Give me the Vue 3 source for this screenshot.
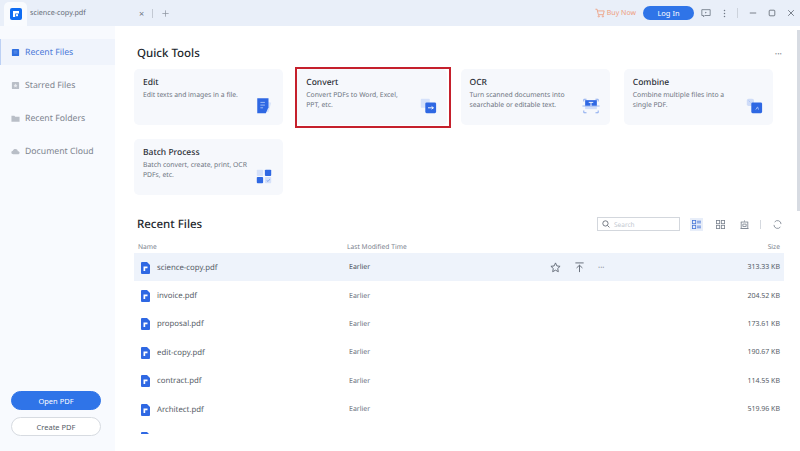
<script setup>
const navItems = [
  { label: 'Recent Files', icon: 'file', active: true },
  { label: 'Starred Files', icon: 'star' },
  { label: 'Recent Folders', icon: 'folder' },
  { label: 'Document Cloud', icon: 'cloud' }
]

const tools = [
  { title: 'Edit', text: 'Edit texts and images in a file.', icon: 'edit' },
  { title: 'Convert', text: 'Convert PDFs to Word, Excel, PPT, etc.', icon: 'convert', marked: true },
  { title: 'OCR', text: 'Turn scanned documents into searchable or editable text.', icon: 'ocr' },
  { title: 'Combine', text: 'Combine multiple files into a single PDF.', icon: 'combine' },
  { title: 'Batch Process', text: 'Batch convert, create, print, OCR PDFs, etc.', icon: 'batch' }
]

const files = [
  { name: 'science-copy.pdf', size: '313.33 KB', active: true },
  { name: 'invoice.pdf', size: '204.52 KB' },
  { name: 'proposal.pdf', size: '173.61 KB' },
  { name: 'edit-copy.pdf', size: '190.67 KB' },
  { name: 'contract.pdf', size: '114.55 KB' },
  { name: 'Architect.pdf', size: '519.96 KB' },
  { name: 'manuscript.pdf', size: '145.13 KB' }
]
</script>

<template>
  <div class="app">
    <header class="titlebar">
      <div class="tab">
        <svg class="logo" viewBox="0 0 12 12">
          <rect width="12" height="12" rx="2" fill="#0f6cf2" />
          <path d="M3 3h6v2.400H5.200V9H3z" fill="#fff" />
          <rect x="6" y="6.200" width="2" height="2" fill="#fff" />
        </svg>
      </div>
      <span class="tab-name">science-copy.pdf</span>
      <span class="tab-close">×</span>
      <span class="tab-sep"></span>
      <svg class="tab-add" viewBox="0 0 10 10"><path d="M5 .5v9M.5 5h9" stroke="#8a919c" fill="none" /></svg>
      <div class="bar-right">
        <svg class="cart" viewBox="0 0 12 12" fill="none" stroke="#ee9c7c">
          <path d="M.5 1.500h2l1.500 6.500h6l1-4.500H3" />
          <circle cx="4.500" cy="10" r=".8" />
          <circle cx="9.500" cy="10" r=".8" />
        </svg>
        <span class="buy">Buy Now</span>
        <button class="login">Log In</button>
        <svg class="bar-icon feedback" viewBox="0 0 12 12" fill="none" stroke="#6f7885">
          <path d="M1 2h10v7H4.500L3 10.500V9H1z" />
          <path d="M5 4.500l2 1-2 1z" fill="#6f7885" stroke="none" />
        </svg>
        <svg class="bar-icon dots" viewBox="0 0 4 12"><g fill="#6f7885"><circle cx="2" cy="2" r="1" /><circle cx="2" cy="6" r="1" /><circle cx="2" cy="10" r="1" /></g></svg>
        <span class="bar-sep"></span>
        <svg class="bar-icon win min" viewBox="0 0 10 10"><path d="M1 5h8" stroke="#5d6570" fill="none" /></svg>
        <svg class="bar-icon win max" viewBox="0 0 10 10"><rect x="1.500" y="1.500" width="7" height="7" rx="1" stroke="#5d6570" fill="none" /></svg>
        <svg class="bar-icon win" viewBox="0 0 10 10"><path d="M1.500 1.500l7 7M8.500 1.500l-7 7" stroke="#5d6570" fill="none" /></svg>
      </div>
    </header>

    <div class="body">
      <aside class="sidebar">
        <nav class="nav">
          <div v-for="item in navItems" :key="item.label" class="nav-item" :class="{ 'nav-item--active': item.active }">
            <svg class="nav-icon" viewBox="0 0 10 10">
              <template v-if="item.icon === 'file'">
                <rect x="1" y="1" width="8" height="8" rx="1" fill="#2f6fe0" />
                <path d="M3 3.500h4M3 5.500h4" stroke="#7fa6ee" stroke-width=".7" />
              </template>
              <template v-else-if="item.icon === 'star'">
                <rect x="1" y="1" width="8" height="8" rx="1" fill="#b9bec7" />
                <path d="M5 2.800l.7 1.500 1.500.2-1.100 1 .3 1.600L5 6.400l-1.400.7.3-1.600-1.100-1 1.500-.2z" fill="#e9ebef" />
              </template>
              <path v-else-if="item.icon === 'folder'" d="M.5 2h3.200l1 1h4.800v5.500H.5z" fill="#b9bec7" />
              <path v-else d="M2.500 8C1.200 8 .4 7.100 .4 6.100c0-1 .8-1.800 1.700-1.800C2.400 3 3.500 2.300 4.800 2.300c1.500 0 2.600 1 2.800 2.300 1.100 0 2 .7 2 1.700S8.800 8 7.800 8z" fill="#b9bec7" />
            </svg>
            <span>{{ item.label }}</span>
          </div>
        </nav>
        <div class="side-actions">
          <button class="side-btn side-btn--primary">Open PDF</button>
          <button class="side-btn">Create PDF</button>
        </div>
      </aside>

      <main class="main">
        <div class="section-head">
          <h2 class="title">Quick Tools</h2>
          <span class="more">···</span>
        </div>

        <div class="tools">
          <div v-for="tool in tools" :key="tool.title" class="tool" :class="{ 'tool--marked': tool.marked }">
            <div class="tool-title">{{ tool.title }}</div>
            <p class="tool-text">{{ tool.text }}</p>
            <svg class="tool-icon" viewBox="0 0 20 20">
              <template v-if="tool.icon === 'edit'">
                <path d="M13 5l5 1.500-3 10.500-4-1z" fill="#d9e4fa" />
                <path d="M2.500 1.500H15v10l-3 6.500H2.500z" fill="#2f68e3" />
                <path d="M6 6h5M6 9h5M6 12h3" stroke="#a9c3f6" stroke-width="1" />
              </template>
              <template v-else-if="tool.icon === 'convert'">
                <rect x="2" y="2" width="10" height="10" rx="1" fill="#d5e1fa" />
                <rect x="7" y="6" width="12" height="12" rx="1.500" fill="#2f68e3" />
                <path d="M10 12h6M14 10.500l2 1.500-2 1.500" stroke="#fff" fill="none" />
              </template>
              <template v-else-if="tool.icon === 'ocr'">
                <path d="M2 5V2.500h3M15 2.500h3V5M2 15v2.500h3M15 17.500h3V15" stroke="#7ea2ec" fill="none" />
                <rect x="3.500" y="3.500" width="13" height="6.500" fill="#2f68e3" />
                <rect x="3.500" y="10" width="13" height="3.500" fill="#cfdcf8" />
                <path d="M.5 10h19" stroke="#8fb0f0" />
                <path d="M7.500 6h5M10 6v4" stroke="#fff" />
              </template>
              <template v-else-if="tool.icon === 'combine'">
                <rect x="2" y="2" width="8" height="8" rx="2" fill="#cfdcf8" />
                <rect x="7" y="6" width="12" height="12" rx="1.500" fill="#2f68e3" />
                <path d="M4 4l2 2M12 14l2-3 1 3" stroke="#a9c3f6" fill="none" />
              </template>
              <template v-else>
                <rect x="2" y="3" width="7" height="7" rx="1" fill="#d5e1fa" />
                <rect x="11" y="3" width="7" height="7" rx="1" fill="#2f68e3" />
                <rect x="2" y="11" width="7" height="7" rx="1" fill="#2f68e3" />
                <rect x="11" y="11" width="7" height="7" rx="1" fill="#d5e1fa" />
                <path d="M13 15l1.500 1L16.500 13.500" stroke="#7ea2ec" fill="none" />
              </template>
            </svg>
          </div>
        </div>

        <div class="section-head section-head--files">
          <h2 class="title">Recent Files</h2>
          <div class="file-tools">
            <div class="search">
              <svg viewBox="0 0 10 10" class="search-icon" fill="none" stroke="#555d68"><circle cx="4.300" cy="4.300" r="3.300" /><path d="M6.800 6.800l2.500 2.500" /></svg>
              <span>Search</span>
            </div>
            <span class="view-btn view-btn--on">
              <svg viewBox="0 0 11 11" fill="none" stroke="#4a78d8"><rect x=".5" y=".5" width="4" height="4" /><rect x=".5" y="6.500" width="4" height="4" /><path d="M6 1.500h5M6 3.500h5M6 7.500h5M6 9.500h5" /></svg>
            </span>
            <span class="view-btn">
              <svg viewBox="0 0 11 11" fill="none" stroke="#7b838f"><rect x=".5" y=".5" width="4" height="4" /><rect x="6.500" y=".5" width="4" height="4" /><rect x=".5" y="6.500" width="4" height="4" /><rect x="6.500" y="6.500" width="4" height="4" /></svg>
            </span>
            <span class="view-btn">
              <svg viewBox="0 0 11 11" fill="none" stroke="#7b838f"><path d="M5.500 .5v1.500M1 2.500h9M1.500 2.500v8h8v-8M.5 10.500h10M3.500 5h4v3h-4z" /></svg>
            </span>
            <span class="tools-sep"></span>
            <svg class="refresh" viewBox="0 0 11 11" fill="none" stroke="#7b838f"><path d="M2 2.500A4.300 4.300 0 0 1 9.800 5M9 8.500A4.300 4.300 0 0 1 1.200 6" /></svg>
          </div>
        </div>

        <div class="table-head">
          <span>Name</span>
          <span>Last Modified Time</span>
          <span></span>
          <span class="size-col">Size</span>
        </div>

        <div class="rows">
          <div v-for="file in files" :key="file.name" class="row" :class="{ 'row--active': file.active }">
            <div class="file-name">
              <svg class="file-icon" viewBox="0 0 9 12">
                <path d="M1 0h5l3 3v8a1 1 0 0 1-1 1H1a1 1 0 0 1-1-1V1a1 1 0 0 1 1-1z" fill="#2f68e3" />
                <path d="M2.500 4.500h4v1.800H4.200V9H2.500z" fill="#fff" />
              </svg>
              <span>{{ file.name }}</span>
            </div>
            <span class="time">Earlier</span>
            <div v-if="file.active" class="row-actions">
              <svg viewBox="0 0 12 12" fill="none" stroke="#5f6773"><path d="M6 1l1.500 3.300 3.500.4-2.600 2.400.7 3.500L6 8.900l-3.100 1.700.7-3.500L1 4.700l3.500-.4z" /></svg>
              <svg viewBox="0 0 12 12" fill="none" stroke="#5f6773"><path d="M1.500 1h9M6 11V3.500M2.800 6.500L6 3.500l3.200 3" /></svg>
              <span class="row-more">···</span>
            </div>
            <span v-else></span>
            <span class="size-col size">{{ file.size }}</span>
          </div>
        </div>
      </main>
      <div class="scrollbar"></div>
    </div>
  </div>
</template>

<style>
html, body { margin: 0; background: #fff; }
</style>

<style scoped>
.app {
  width: 800px;
  height: 451px;
  display: flex;
  flex-direction: column;
  overflow: hidden;
  font-family: "Noto Sans", "Open Sans", sans-serif;
  color: #33383f;
  text-rendering: geometricPrecision;
}
.titlebar {
  height: 26px;
  flex: none;
  display: flex;
  align-items: center;
  background: #e9eff9;
}
.tab {
  width: 23px;
  height: 24px;
  margin: 2px 0 0 4px;
  background: #f9fbfe;
  border-radius: 5px 5px 0 0;
  display: flex;
  align-items: center;
  justify-content: center;
}
.logo { width: 12px; height: 12px; }
.tab-name { margin-left: 3px; font-size: 7.200px; color: #666d78; width: 109px; }
.tab-close { font-size: 9px; color: #6a717c; width: 9px; }
.tab-sep { width: 1px; height: 9px; background: #c3c9d3; margin-left: 4px; }
.tab-add { width: 7px; height: 7px; margin-left: 9px; }
.bar-right { margin-left: auto; display: flex; align-items: center; padding-right: 5px; }
.cart { width: 10px; height: 10px; }
.buy { font-size: 7px; color: #ee9c7c; margin-left: 2px; }
.login {
  width: 51px;
  height: 14px;
  margin-left: 7px;
  padding: 0;
  border: none;
  border-radius: 7px;
  background: #2f74e8;
  color: #fff;
  font: 7.500px "Noto Sans", sans-serif;
}
.bar-icon { display: block; flex: none; }
.feedback { width: 10px; height: 10px; margin-left: 7px; }
.dots { width: 3px; height: 9px; margin-left: 12px; }
.bar-sep { width: 1px; height: 10px; background: #cdd3dc; margin: 0 11px; }
.win { width: 8px; height: 8px; }
.min { margin-right: 11px; }
.max { margin-right: 11px; }

.body { flex: 1; display: flex; min-height: 0; }
.sidebar {
  width: 115px;
  flex: none;
  background: #f8fafe;
  display: flex;
  flex-direction: column;
  justify-content: space-between;
  padding-bottom: 15px;
  box-sizing: border-box;
}
.nav { padding-top: 13px; display: flex; flex-direction: column; gap: 7px; }
.nav-item {
  height: 26px;
  display: flex;
  align-items: center;
  gap: 5px;
  padding-left: 11px;
  font-size: 8.700px;
  color: #7d848e;
}
.nav-item--active {
  color: #4a78d8;
  background: #f0f4fc;
  box-shadow: inset 1px 0 0 #bcd0f4;
}
.nav-icon { width: 9px; height: 9px; flex: none; }
.side-actions { display: flex; flex-direction: column; gap: 7px; align-items: flex-start; padding-left: 11px; }
.side-btn {
  width: 90px;
  height: 19px;
  padding: 0;
  border: 1px solid #d7dbe1;
  border-radius: 10px;
  background: #fff;
  color: #555c66;
  font: 7.500px "Noto Sans", sans-serif;
}
.side-btn--primary { background: #2f74e8; border-color: #2f74e8; color: #fff; }

.main {
  flex: 1;
  min-width: 0;
  padding: 19px 14px 0 19px;
  display: flex;
  flex-direction: column;
}
.section-head { display: flex; align-items: center; justify-content: space-between; padding: 0 0 0 3px; height: 16px; }
.title { margin: 0; font-size: 11.500px; font-weight: 500; color: #23272d; }
.more { font-size: 9px; color: #666d78; margin-right: 4px; }
.tools {
  width: 639px;
  margin-top: 8px;
  display: grid;
  grid-template-columns: repeat(4, 1fr);
  gap: 14px;
}
.tool {
  height: 56px;
  background: #f6f8fc;
  border-radius: 5px;
  padding: 7px 9px 0;
  box-sizing: border-box;
  position: relative;
}
.tool--marked::after {
  content: "";
  position: absolute;
  left: -2px;
  top: -2px;
  right: -4px;
  bottom: -3px;
  border: 2px solid #c5202c;
  box-sizing: border-box;
  pointer-events: none;
}
.tool-title { font-size: 8.500px; font-weight: 500; color: #2b2f36; line-height: 13px; }
.tool-text { margin: 1px 0 0; width: 105px; font-size: 6.800px; line-height: 9.500px; color: #6d747f; }
.tool-icon { position: absolute; right: 10px; bottom: 10px; width: 18px; height: 18px; }

.section-head--files { margin-top: 20px; padding-right: 4px; height: 18px; }
.file-tools { display: flex; align-items: center; }
.search {
  width: 83px;
  height: 14px;
  box-sizing: border-box;
  border: 1px solid #d3d7dd;
  display: flex;
  align-items: center;
  gap: 4px;
  padding-left: 4px;
  font-size: 6.500px;
  color: #c2c7cf;
}
.search-icon { width: 8px; height: 8px; }
.view-btn {
  width: 13px;
  height: 13px;
  margin-left: 11px;
  display: flex;
  align-items: center;
  justify-content: center;
}
.view-btn--on { background: #e8eef9; margin-left: 10px; }
.view-btn svg { width: 9px; height: 9px; }
.tools-sep { width: 1px; height: 9px; background: #d5d9df; margin: 0 12px 0 9px; }
.refresh { width: 9px; height: 9px; }

.table-head, .row {
  display: grid;
  align-items: center;
  padding: 0 4px 0 4px;
  margin-right: 2px;
}
.table-head {
  grid-template-columns: 209px 186px 1fr auto;
  margin-top: 7px;
  height: 13px;
  font-size: 6.700px;
  color: #7a818c;
}
.rows { height: 181px; overflow: hidden; }
.row {
  grid-template-columns: 211px 189px 1fr auto;
  height: 28.400px;
  box-sizing: border-box;
  padding-top: 1px;
  font-size: 7.500px;
  color: #6d747f;
}
.row--active { background: #eef3fb; color: #4d545e; }
.file-name { display: flex; align-items: center; gap: 7px; padding-left: 3px; font-size: 7.800px; color: #555c66; }
.file-icon { width: 9px; height: 12px; flex: none; }
.time { font-size: 7px; }
.row-actions { display: flex; align-items: center; gap: 13px; padding-left: 12px; }
.row-actions svg { width: 11px; height: 11px; }
.row-more { font-size: 8px; color: #5f6773; }
.size { font-size: 7px; color: #555c66; }
.scrollbar {
  position: absolute;
  left: 797px;
  top: 30px;
  width: 3px;
  height: 181px;
  background: #d7dbe2;
}
</style>
